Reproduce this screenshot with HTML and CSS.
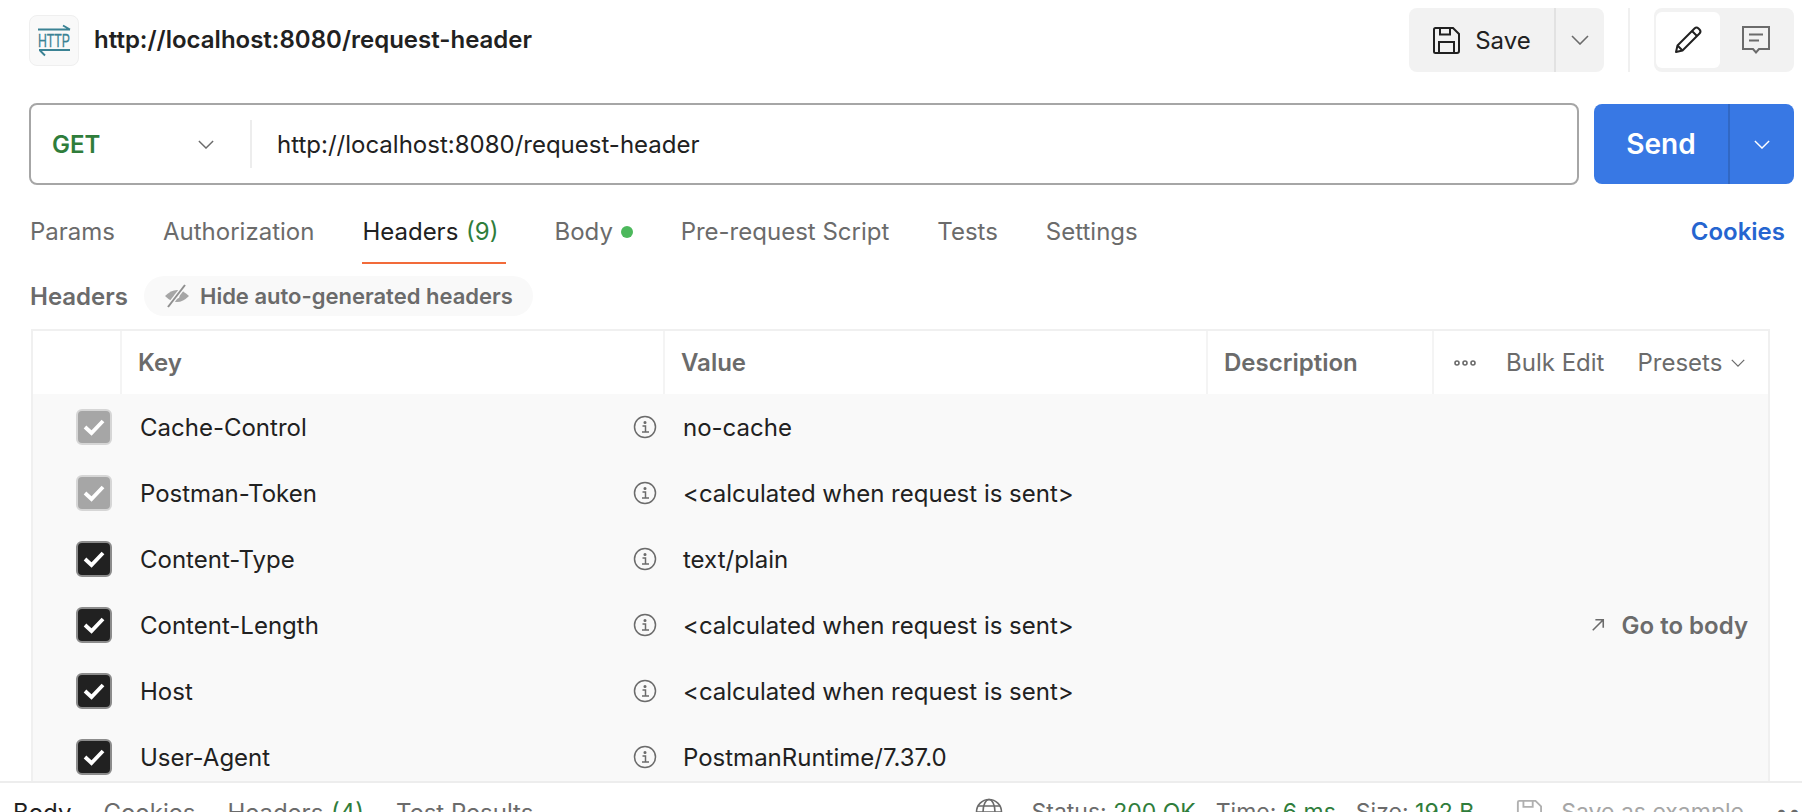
FILE: index.html
```html
<!DOCTYPE html>
<html lang="en">
<head>
    <meta charset="UTF-8">
    <title>http://localhost:8080/request-header</title>
    <link rel="stylesheet" href="styles.css">
</head>
<body>
    <div class="app">
        <header class="topbar">
            <div class="req-title">
                <div class="logo">
                    <svg width="36" height="34" viewBox="0 0 36 34" fill="none" stroke="#3a8294">
                        <path d="M2 6.5H34M27 2.5L34 6.5" stroke-width="1.9"/>
                        <path d="M3 27H34M4 27.5L9 32.5" stroke-width="1.9"/>
                        <text x="18" y="23.5" text-anchor="middle" textLength="32" lengthAdjust="spacingAndGlyphs" class="logo-text">HTTP</text>
                    </svg>
                </div>
                <span class="req-name">http://localhost:8080/request-header</span>
            </div>
            <div class="top-actions">
                <div class="save-group">
                    <button class="save-btn">
                        <svg width="28" height="28" viewBox="0 0 28 28" fill="none" stroke="#212121" stroke-width="2">
                            <path d="M2 3.5Q2 2 3.5 2H21L27 8V25Q27 27 25 27H3.5Q2 27 2 25.5Z"/>
                            <path d="M8 2V8.5H18V2M7 27V16H22V27"/>
                        </svg>
                        Save
                    </button>
                    <button class="save-more">
                        <svg class="chev" width="18" height="10" viewBox="0 0 18 10"><path d="M1 1L9 9L17 1"/></svg>
                    </button>
                </div>
                <div class="top-sep"></div>
                <div class="mode-toggle">
                    <div class="mode active">
                        <svg width="30" height="30" viewBox="0 0 30 30" fill="none" stroke="#212121" stroke-width="2" stroke-linejoin="round">
                            <path d="M3 27L4.5 20.5L21.5 3.5Q23.5 1.5 25.5 3.5L26.5 4.5Q28.5 6.5 26.5 8.5L9.5 25.5Z"/>
                            <path d="M19 6L24 11M4.5 20.5L9.5 25.5"/>
                        </svg>
                    </div>
                    <div class="mode">
                        <svg width="30" height="30" viewBox="0 0 30 30" fill="none" stroke="#6b6b6b" stroke-width="2">
                            <path d="M2 2H28V24H18L15 27.5L12 24H2Z"/>
                            <path d="M8 9.5H22M8 15.5H18"/>
                        </svg>
                    </div>
                </div>
            </div>
        </header>

        <div class="url-row">
            <div class="url-box">
                <div class="method">
                    <span class="method-name">GET</span>
                    <svg class="chev" width="16" height="9" viewBox="0 0 18 10"><path d="M1 1L9 9L17 1"/></svg>
                </div>
                <div class="url-text">http://localhost:8080/request-header</div>
            </div>
            <div class="send-group">
                <button class="send-btn">Send</button>
                <button class="send-more">
                    <svg width="16" height="9" viewBox="0 0 18 10" fill="none" stroke="#fff" stroke-width="1.6"><path d="M1 1L9 9L17 1"/></svg>
                </button>
            </div>
        </div>

        <nav class="tabs">
            <div class="tab-list">
                <a class="tab">Params</a>
                <a class="tab">Authorization</a>
                <a class="tab active">Headers <span class="count">(9)</span></a>
                <a class="tab">Body <span class="dot"></span></a>
                <a class="tab">Pre-request Script</a>
                <a class="tab">Tests</a>
                <a class="tab">Settings</a>
            </div>
            <a class="cookies">Cookies</a>
        </nav>

        <div class="sub-head">
            <span class="sub-title">Headers</span>
            <div class="pill">
                <svg width="26" height="24" viewBox="0 0 26 24" fill="none">
                    <path d="M1 12Q13 0 25 12Q13 24 1 12Z" fill="#a6a6a6"/>
                    <circle cx="13" cy="12" r="2.5" fill="#f9f9f9"/>
                    <path d="M21 1L4 23" stroke="#f9f9f9" stroke-width="4.5"/>
                    <path d="M21 1L4 23" stroke="#8f8f8f" stroke-width="2"/>
                </svg>
                Hide auto-generated headers
            </div>
        </div>

        <div class="table">
            <div class="row head">
                <div class="cell"></div>
                <div class="cell">Key</div>
                <div class="cell">Value</div>
                <div class="cell">Description</div>
                <div class="cell actions">
                    <svg width="22" height="6" viewBox="0 0 22 6" fill="none" stroke="#6b6b6b" stroke-width="1.6"><circle cx="3" cy="3" r="2"/><circle cx="11" cy="3" r="2"/><circle cx="19" cy="3" r="2"/></svg>
                    <span>Bulk Edit</span>
                    <span class="presets">Presets
                        <svg class="chev" width="14" height="8" viewBox="0 0 18 10"><path d="M1 1L9 9L17 1"/></svg>
                    </span>
                </div>
            </div>
            <div class="row">
                <div class="cell"><span class="check muted"><svg width="24" height="20" viewBox="0 0 24 20"><path d="M3 10L9.5 16L21 4"/></svg></span></div>
                <div class="cell key"><span>Cache-Control</span><svg class="info" width="24" height="24" viewBox="0 0 24 24"><use href="#info"/></svg></div>
                <div class="cell">no-cache</div>
                <div class="cell"></div>
                <div class="cell"></div>
            </div>
            <div class="row">
                <div class="cell"><span class="check muted"><svg width="24" height="20" viewBox="0 0 24 20"><path d="M3 10L9.5 16L21 4"/></svg></span></div>
                <div class="cell key"><span>Postman-Token</span><svg class="info" width="24" height="24" viewBox="0 0 24 24"><use href="#info"/></svg></div>
                <div class="cell">&lt;calculated when request is sent&gt;</div>
                <div class="cell"></div>
                <div class="cell"></div>
            </div>
            <div class="row">
                <div class="cell"><span class="check"><svg width="24" height="20" viewBox="0 0 24 20"><path d="M3 10L9.5 16L21 4"/></svg></span></div>
                <div class="cell key"><span>Content-Type</span><svg class="info" width="24" height="24" viewBox="0 0 24 24"><use href="#info"/></svg></div>
                <div class="cell">text/plain</div>
                <div class="cell"></div>
                <div class="cell"></div>
            </div>
            <div class="row">
                <div class="cell"><span class="check"><svg width="24" height="20" viewBox="0 0 24 20"><path d="M3 10L9.5 16L21 4"/></svg></span></div>
                <div class="cell key"><span>Content-Length</span><svg class="info" width="24" height="24" viewBox="0 0 24 24"><use href="#info"/></svg></div>
                <div class="cell">&lt;calculated when request is sent&gt;</div>
                <div class="cell"></div>
                <div class="cell go-body">
                    <svg width="14" height="14" viewBox="0 0 16 16" fill="none" stroke="#6b6b6b" stroke-width="1.8"><path d="M2 14L14 2M5 2H14V11"/></svg>
                    Go to body
                </div>
            </div>
            <div class="row">
                <div class="cell"><span class="check"><svg width="24" height="20" viewBox="0 0 24 20"><path d="M3 10L9.5 16L21 4"/></svg></span></div>
                <div class="cell key"><span>Host</span><svg class="info" width="24" height="24" viewBox="0 0 24 24"><use href="#info"/></svg></div>
                <div class="cell">&lt;calculated when request is sent&gt;</div>
                <div class="cell"></div>
                <div class="cell"></div>
            </div>
            <div class="row">
                <div class="cell"><span class="check"><svg width="24" height="20" viewBox="0 0 24 20"><path d="M3 10L9.5 16L21 4"/></svg></span></div>
                <div class="cell key"><span>User-Agent</span><svg class="info" width="24" height="24" viewBox="0 0 24 24"><use href="#info"/></svg></div>
                <div class="cell">PostmanRuntime/7.37.0</div>
                <div class="cell"></div>
                <div class="cell"></div>
            </div>
        </div>

        <footer class="resp-bar">
            <div class="resp-tabs">
                <a class="resp-tab on">Body</a>
                <a class="resp-tab">Cookies</a>
                <a class="resp-tab">Headers <span class="count">(4)</span></a>
                <a class="resp-tab">Test Results</a>
            </div>
            <div class="resp-meta">
                <svg class="globe" width="28" height="28" viewBox="0 0 28 28" fill="none" stroke="#6b6b6b" stroke-width="1.6">
                    <circle cx="14" cy="14" r="12.5"/>
                    <ellipse cx="14" cy="14" rx="6" ry="12.5"/>
                    <path d="M3 8H25M1.5 14H26.5"/>
                </svg>
                <span class="meta">Status: <b>200 OK</b></span>
                <span class="meta">Time: <b>6 ms</b></span>
                <span class="meta">Size: <b>192 B</b></span>
                <span class="save-example">
                    <svg width="26" height="26" viewBox="0 0 28 28" fill="none" stroke="#b0b0b0" stroke-width="2">
                        <path d="M2 3.5Q2 2 3.5 2H21L27 8V25Q27 27 25 27H3.5Q2 27 2 25.5Z"/>
                        <path d="M8 2V8.5H18V2M7 27V16H22V27"/>
                    </svg>
                    Save as example
                </span>
                <span class="more-dots">•••</span>
            </div>
        </footer>
    </div>

    <svg width="0" height="0" class="defs">
        <defs>
            <g id="info" fill="none" stroke="#6b6b6b" stroke-width="1.5">
                <circle cx="12" cy="12" r="10.5"/>
                <path d="M9.5 11H12.5V17M9 17H16"/>
                <circle cx="12" cy="7.5" r="0.8" fill="#6b6b6b"/>
            </g>
        </defs>
    </svg>
</body>
</html>
```

FILE: styles.css
```css
* {
    box-sizing: border-box;
}

html, body {
    margin: 0;
    height: 100%;
    overflow: hidden;
}

body {
    font-family: Inter, "Noto Sans", sans-serif;
    font-size: 24px;
    color: #212121;
    background: #fff;
}

button {
    font: inherit;
    border: none;
    cursor: pointer;
    display: flex;
    align-items: center;
    justify-content: center;
}

.defs {
    display: block;
}

.chev {
    fill: none;
    stroke: #6b6b6b;
    stroke-width: 1.6;
}

.app {
    height: 812px;
    overflow: hidden;
    display: flex;
    flex-direction: column;
}

/* top bar */
.topbar {
    display: flex;
    justify-content: space-between;
    align-items: center;
    height: 72px;
    padding: 8px 8px 0 29px;
}

.req-title {
    display: flex;
    align-items: center;
    gap: 15px;
}

.logo {
    width: 50px;
    height: 51px;
    background: #f9f9f9;
    border: 1px solid #efefef;
    border-radius: 8px;
    display: flex;
    align-items: center;
    justify-content: center;
}

.logo-text {
    font-family: "Liberation Sans", sans-serif;
    font-size: 19px;
    fill: #3a8294;
    stroke: #3a8294;
    stroke-width: 0.3;
}

.req-name {
    font-weight: 600;
    padding-bottom: 2px;
}

.top-actions {
    display: flex;
    align-items: center;
    height: 64px;
}

.save-group {
    display: flex;
    width: 195px;
    height: 64px;
    background: #f2f2f2;
    border-radius: 8px;
    overflow: hidden;
}

.save-btn {
    flex: 1;
    gap: 15px;
    background: none;
    color: #212121;
    border-right: 2px solid #e2e2e2;
}

.save-more {
    width: 48px;
    background: none;
    padding: 0;
}

.top-sep {
    width: 2px;
    height: 64px;
    margin: 0 24px;
    background: #f0f0f0;
}

.mode-toggle {
    display: flex;
    width: 140px;
    height: 64px;
    padding: 4px 2px;
    background: #f2f2f2;
    border-radius: 8px;
}

.mode {
    flex: 1;
    display: flex;
    align-items: center;
    justify-content: center;
    border-radius: 6px;
}

.mode.active {
    flex: 0 0 64px;
    background: #fff;
}

/* url row */
.url-row {
    display: flex;
    gap: 15px;
    margin-top: 31px;
    padding: 0 8px 0 29px;
    height: 82px;
    align-items: center;
}

.url-box {
    flex: 1;
    height: 82px;
    display: flex;
    align-items: center;
    border: 2px solid #a6a6a6;
    border-radius: 8px;
}

.method {
    width: 221px;
    height: 48px;
    display: flex;
    align-items: center;
    justify-content: space-between;
    padding: 0 36px 0 21px;
    border-right: 2px solid #ededed;
}

.method-name {
    color: #2f7d3b;
    font-weight: 600;
}

.url-text {
    padding-left: 25px;
}

.send-group {
    display: flex;
    width: 200px;
    height: 80px;
    background: #3878e4;
    border-radius: 8px;
    overflow: hidden;
}

.send-btn {
    flex: 1;
    background: none;
    color: #fff;
    font-weight: 600;
    font-size: 28px;
    border-right: 2px solid #3168c4;
}

.send-more {
    width: 64px;
    background: none;
    padding: 0;
}

/* tabs */
.tabs {
    display: flex;
    justify-content: space-between;
    margin-top: 20px;
    padding: 0 17px 0 30px;
    height: 59px;
    color: #6b6b6b;
}

.tab-list {
    display: flex;
    gap: 48px;
}

.tab {
    display: block;
    position: relative;
    padding-top: 12px;
    white-space: nowrap;
}

.tab.active {
    color: #212121;
    padding-right: 8px;
}

.tab.active::after {
    content: "";
    position: absolute;
    left: 0;
    right: 0;
    bottom: 0;
    height: 2px;
    background: #f26b3a;
}

.count {
    color: #2f7d3b;
    margin-left: 1px;
}

.dot {
    display: inline-block;
    width: 12px;
    height: 12px;
    margin-left: 1px;
    border-radius: 50%;
    background: #4cb85c;
    vertical-align: 2px;
}

.cookies {
    padding-top: 12px;
    color: #2565d0;
    font-weight: 600;
}

/* headers sub row */
.sub-head {
    display: flex;
    align-items: center;
    gap: 16px;
    margin-top: 12px;
    padding-left: 30px;
    height: 40px;
}

.sub-title {
    color: #6b6b6b;
    font-weight: 600;
}

.pill {
    display: flex;
    align-items: center;
    gap: 10px;
    height: 40px;
    padding: 0 20px;
    border-radius: 20px;
    background: #f9f9f9;
    color: #6b6b6b;
    font-weight: 600;
    font-size: 22px;
}

/* table */
.table {
    flex: 1;
    min-height: 0;
    overflow: hidden;
    margin: 13px 32px 0 31px;
    border: 2px solid #f0f0f0;
    border-bottom: none;
    background: #f9f9f9;
}

.row {
    display: grid;
    grid-template-columns: 89px 543px 543px 226px 1fr;
    height: 66px;
    align-items: center;
}

.row.head {
    height: 63px;
    background: #fff;
    color: #6b6b6b;
    font-weight: 600;
}

.row.head .cell {
    height: 100%;
    display: flex;
    align-items: center;
    padding-left: 16px;
    border-right: 2px solid #f4f4f4;
}

.row.head .cell:last-child {
    border-right: none;
}

.row.head .actions {
    font-weight: 400;
    gap: 30px;
    padding-left: 20px;
}

.presets {
    display: flex;
    align-items: center;
    gap: 9px;
    margin-left: 3px;
}

.row .cell {
    padding-left: 18px;
}

.row .cell:first-child {
    padding-left: 43px;
}

.row.head .cell:first-child {
    padding-left: 0;
}

.check {
    display: flex;
    align-items: center;
    justify-content: center;
    width: 36px;
    height: 36px;
    background: #212121;
    border: 2px solid #8c8c8c;
    border-radius: 6px;
}

.check.muted {
    background: #a6a6a6;
    border-color: #d6d6d6;
}

.check path {
    fill: none;
    stroke: #fff;
    stroke-width: 3.8;
}

.key {
    display: flex;
    align-items: center;
    justify-content: space-between;
    padding-right: 8px;
}

.go-body {
    display: flex;
    align-items: center;
    justify-content: flex-end;
    gap: 17px;
    padding-right: 20px;
    color: #6b6b6b;
    font-weight: 600;
}

/* response bar */
.resp-bar {
    flex: none;
    height: 60px;
    margin-bottom: -29px;
    border-top: 2px solid #ededed;
    display: flex;
    justify-content: space-between;
    align-items: center;
    padding: 0 0 0 13px;
    color: #6b6b6b;
}

.resp-tabs {
    display: flex;
    gap: 32px;
}

.resp-tab.on {
    color: #212121;
}

.resp-meta {
    display: flex;
    align-items: center;
    font-size: 23px;
}

.globe {
    margin-right: 28px;
}

.meta {
    margin-right: 20px;
}

.meta b {
    font-weight: 400;
    color: #2f7d3b;
}

.save-example {
    display: flex;
    align-items: center;
    gap: 19px;
    margin-left: 22px;
    color: #a6a6a6;
}

.more-dots {
    margin-left: 31px;
    width: 27px;
    overflow: hidden;
}
```
